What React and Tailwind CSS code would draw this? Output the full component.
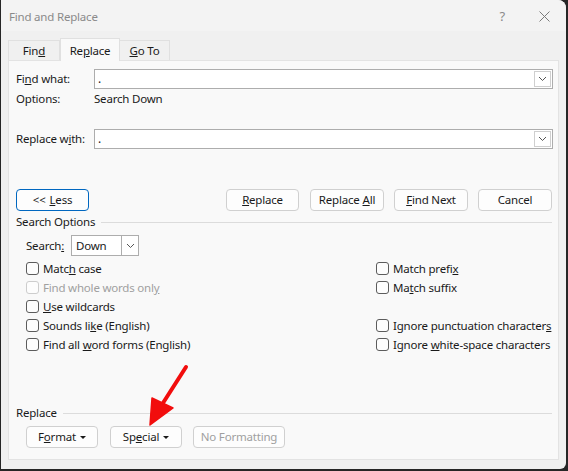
import React from 'react'

const font = { fontFamily: '"Noto Sans", "Open Sans", sans-serif' }

const Btn = ({ children, className = '', primary, disabled }) => (
  <div
    className={`flex h-[22px] items-center justify-center whitespace-nowrap rounded-[4px] border bg-[#fdfdfd] text-[11.5px] ${
      primary ? 'border-[#0067c0]' : 'border-[#d0d0d0]'
    } ${disabled ? 'text-[#a0a0a0]' : 'text-[#1a1a1a]'} ${className}`}
  >
    {children}
  </div>
)

const Chevron = () => (
  <svg width="9" height="6" viewBox="0 0 9 6" className="block">
    <path d="M1 1 L4.5 4.5 L8 1" fill="none" stroke="#555" strokeWidth="1" />
  </svg>
)

const Combo = ({ value }) => (
  <div className="flex h-[20px] flex-1 items-center border border-[#adadad] bg-white">
    <span className="flex-1 pl-[3px] text-[12px] leading-none text-[#1a1a1a]">{value}</span>
    <div className="mr-[1px] flex h-[16px] w-[17px] items-center justify-center border border-[#cfcfcf] bg-white">
      <Chevron />
    </div>
  </div>
)

const Check = ({ children, disabled }) => (
  <div className="flex h-[19px] items-center whitespace-nowrap">
    <div
      className={`h-[13px] w-[13px] shrink-0 rounded-[3px] border bg-[#fdfdfd] ${
        disabled ? 'border-[#cdcdcd]' : 'border-[#5c5c5c]'
      }`}
    />
    <span className={`ml-[4px] text-[11.5px] ${disabled ? 'text-[#a0a0a0]' : 'text-[#1a1a1a]'}`}>{children}</span>
  </div>
)

const Group = ({ label }) => (
  <div className="flex h-[16px] items-center pl-[7px] pr-[6px]">
    <span className="text-[11.5px] text-[#1a1a1a]">{label}</span>
    <div className="ml-[6px] h-px flex-1 bg-[#dcdcdc]" />
  </div>
)

const Caret = () => <span className="ml-[4px] inline-block border-x-[3px] border-t-[3px] border-x-transparent border-t-[#1a1a1a] align-middle" />

export default function App() {
  return (
    <div className="relative h-[471px] w-[568px] overflow-hidden bg-[#262626] tracking-[-0.2px]" style={font}>
      <div className="ml-[1px] flex h-[469px] w-[565px] flex-col overflow-hidden rounded-tr-[8px] rounded-br-[6px] bg-[#f0f0f0]">
        {/* title bar */}
        <div className="flex h-[31px] items-center bg-[#f3f3f3] pl-[8px] pt-[2px]">
          <span className="text-[11.5px] text-[#8a8a8a]">Find and Replace</span>
          <span className="ml-auto text-[13px] text-[#8a8a8a]">?</span>
          <svg width="11" height="11" viewBox="0 0 11 11" className="ml-[34px] mr-[16px]">
            <path d="M0.5 0.5 L10.5 10.5 M10.5 0.5 L0.5 10.5" stroke="#7a7a7a" strokeWidth="1" />
          </svg>
        </div>

        {/* tabs */}
        <div className="flex h-[29px] items-end pl-[7px]">
          <div className="flex h-[20px] w-[52px] items-center justify-center border border-b-0 border-[#e0e0e0] bg-[#f0f0f0] text-[11.5px] text-[#1a1a1a]">
            Fin<u>d</u>
          </div>
          <div className="relative z-10 -mb-px flex h-[23px] w-[60px] items-start justify-center border border-b-0 border-[#e0e0e0] bg-[#f9f9f9] pt-[3px] text-[11.5px] text-[#1a1a1a]">
            Re<u>p</u>lace
          </div>
          <div className="flex h-[20px] w-[50px] items-center justify-center border border-b-0 border-l-0 border-[#e0e0e0] bg-[#f0f0f0] text-[11.5px] text-[#1a1a1a]">
            <u>G</u>o To
          </div>
        </div>

        {/* panel */}
        <div className="ml-[7px] flex h-[400px] w-[551px] flex-col border border-[#e3e3e3] bg-[#f9f9f9]">
          <div className="mt-[8px] flex items-center pl-[7px] pr-[5px]">
            <span className="w-[78px] text-[11.5px] text-[#1a1a1a]">
              Fi<u>n</u>d what:
            </span>
            <Combo value="." />
          </div>
          <div className="mt-[2px] flex h-[16px] items-center pl-[7px] text-[11.5px] text-[#1a1a1a]">
            <span className="w-[78px]">Options:</span>
            <span>Search Down</span>
          </div>
          <div className="mt-[22px] flex items-center pl-[7px] pr-[5px]">
            <span className="w-[78px] text-[11.5px] text-[#1a1a1a]">
              Replace w<u>i</u>th:
            </span>
            <Combo value="." />
          </div>

          <div className="mt-[40px] flex pl-[7px] pr-[6px]">
            <Btn primary className="w-[73px]">
              &lt;&lt; <u className="ml-[4px]">L</u>ess
            </Btn>
            <Btn className="ml-auto w-[73px]">
              <u>R</u>eplace
            </Btn>
            <Btn className="ml-[11px] w-[74px]">
              Replace <u className="ml-[3px]">A</u>ll
            </Btn>
            <Btn className="ml-[10px] w-[74px]">
              <u>F</u>ind Next
            </Btn>
            <Btn className="ml-[10px] w-[74px]">Cancel</Btn>
          </div>

          <div className="mt-[3px]">
            <Group label="Search Options" />
          </div>

          <div className="mt-[5px] flex items-center pl-[17px]">
            <span className="w-[45px] text-[11.5px] text-[#1a1a1a]">
              Search<u>:</u>
            </span>
            <div className="flex h-[21px] w-[68px] items-center border border-[#adadad] bg-white">
              <span className="flex-1 pl-[4px] text-[11.5px] text-[#1a1a1a]">Down</span>
              <div className="flex h-full w-[17px] items-center justify-center border-l border-[#adadad]">
                <Chevron />
              </div>
            </div>
          </div>

          <div className="mt-[3px] flex pl-[17px]">
            <div className="flex w-[350px] flex-col">
              <Check>
                Matc<u>h</u> case
              </Check>
              <Check disabled>
                Find whole words onl<u>y</u>
              </Check>
              <Check>
                <u>U</u>se wildcards
              </Check>
              <Check>
                Sounds li<u>k</u>e (English)
              </Check>
              <Check>
                Find all <u>w</u>ord forms (English)
              </Check>
            </div>
            <div className="flex flex-col">
              <Check>
                Match prefi<u>x</u>
              </Check>
              <Check>
                Ma<u>t</u>ch suffix
              </Check>
              <div className="h-[19px]" />
              <Check>
                Ignore punctuation character<u>s</u>
              </Check>
              <Check>
                Ignore <u>w</u>hite-space characters
              </Check>
            </div>
          </div>

          <div className="mt-[51px]">
            <Group label="Replace" />
          </div>

          <div className="mt-[5px] flex pl-[17px]">
            <Btn className="w-[72px]">
              F<u>o</u>rmat
              <Caret />
            </Btn>
            <Btn className="ml-[12px] w-[72px]">
              Sp<u>e</u>cial
              <Caret />
            </Btn>
            <Btn disabled className="ml-[11px] w-[92px]">
              No Formatting
            </Btn>
          </div>
        </div>
      </div>

      {/* red annotation arrow */}
      <svg className="pointer-events-none absolute left-0 top-0" width="568" height="471">
        <line x1="186" y1="367" x2="163" y2="403" stroke="#f20d0d" strokeWidth="4" strokeLinecap="round" />
        <path d="M150 425 L152 398 L173 408 Z" fill="#f20d0d" stroke="#f20d0d" strokeWidth="1.5" strokeLinejoin="round" />
      </svg>
    </div>
  )
}
